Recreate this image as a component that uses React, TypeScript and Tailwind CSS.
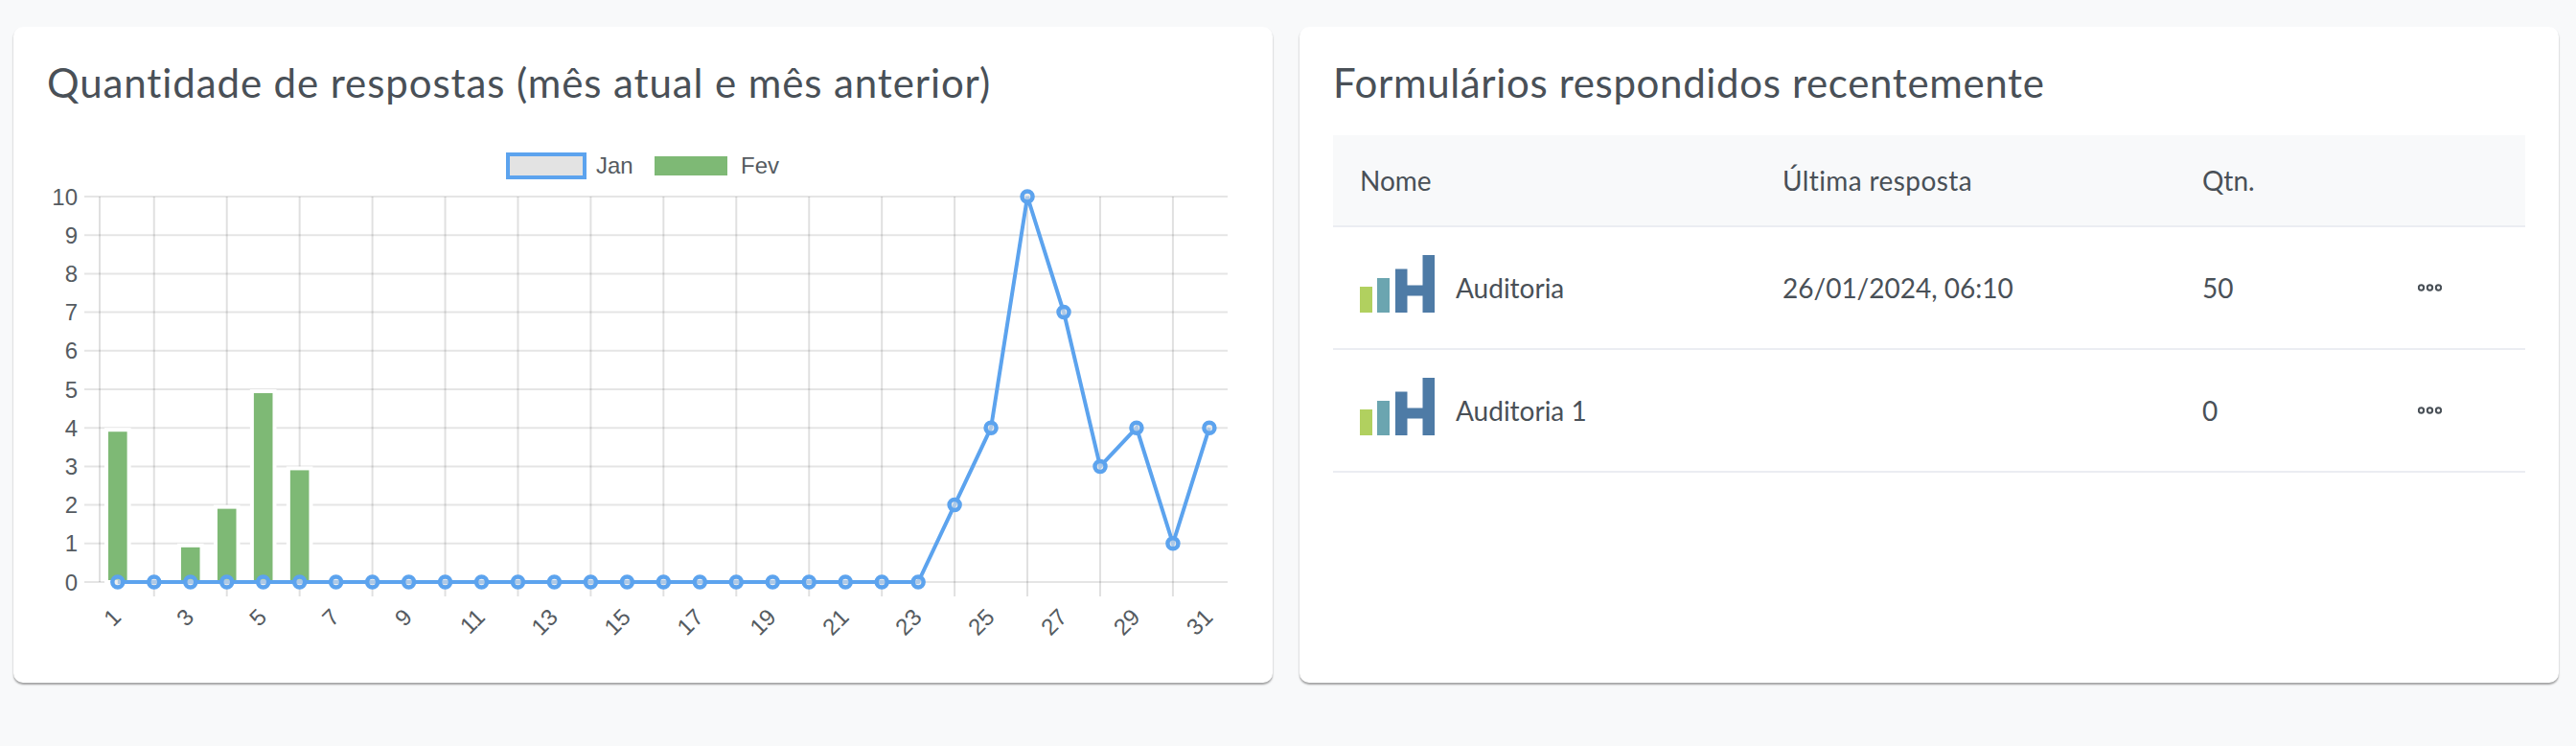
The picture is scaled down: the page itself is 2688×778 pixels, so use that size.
import React from 'react';

const janData = [0, 0, 0, 0, 0, 0, 0, 0, 0, 0, 0, 0, 0, 0, 0, 0, 0, 0, 0, 0, 0, 0, 0, 2, 4, 10, 7, 3, 4, 1, 4];
const fevData = [3.9, 0, 0.9, 1.9, 4.9, 2.9];

const Y_ZERO = 607;
const Y_UNIT = 40.2;
const X_FIRST = 122.8;
const X_STEP = 37.97;

const px = (i: number) => X_FIRST + i * X_STEP;
const py = (v: number) => Y_ZERO - v * Y_UNIT;

const SalesChart = () => {
  const yTicks = [0, 1, 2, 3, 4, 5, 6, 7, 8, 9, 10];
  const vLines = [104];
  for (let i = 1; i < 31; i += 2) vLines.push(px(i));
  const linePoints = janData.map((v, i) => `${px(i)},${py(v)}`).join(' ');

  return (
    <svg viewBox="49 141 1244 536" className="block w-[1244px] h-[536px] font-['Liberation_Sans',sans-serif] text-[24px]">
      {/* grid */}
      {yTicks.map((t) => (
        <line key={t} x1="88" x2="1281" y1={py(t)} y2={py(t)} stroke="#000" strokeOpacity="0.1" strokeWidth="2" />
      ))}
      {vLines.map((x, i) => (
        <line key={i} x1={x} x2={x} y1="205" y2={i === 0 ? 607 : 622} stroke="#000" strokeOpacity="0.12" strokeWidth="2" />
      ))}

      {/* legend */}
      <rect x="530" y="161" width="80" height="24" fill="#e3e3e3" stroke="#5ca3ee" strokeWidth="4" />
      <text x="622" y="181" fill="#555b61">Jan</text>
      <rect x="683" y="163" width="76" height="20" fill="#7eb975" />
      <text x="773" y="181" fill="#555b61">Fev</text>

      {/* y axis */}
      {yTicks.map((t) => (
        <text key={t} x="81" y={py(t) + 8.5} textAnchor="end" fill="#555b61">{t}</text>
      ))}

      {/* x axis */}
      {janData.map((_, i) =>
        i % 2 === 0 ? (
          <text
            key={i}
            transform={`translate(${px(i) + 5} 645) rotate(-45)`}
            textAnchor="end"
            fill="#555b61"
          >
            {i + 1}
          </text>
        ) : null
      )}

      {/* bars */}
      {fevData.map((v, i) =>
        v > 0 ? (
          <rect
            key={i}
            x={px(i) - 11.8}
            y={py(v) - 2}
            width="23.6"
            height={v * Y_UNIT + 2}
            fill="#7eb975"
            stroke="#fff"
            strokeWidth="4"
          />
        ) : null
      )}

      {/* line */}
      <polyline points={linePoints} fill="none" stroke="#5ca3ee" strokeWidth="4" />
      {janData.map((v, i) => (
        <circle key={i} cx={px(i)} cy={py(v)} r="5.5" fill="#e3e3e3" fillOpacity="0.6" stroke="#5ca3ee" strokeWidth="4.5" />
      ))}
    </svg>
  );
};

const FormLogo = () => (
  <svg viewBox="0 0 78 60" className="w-[78px] h-[60px] shrink-0 -mt-2">
    <rect x="0" y="33" width="13" height="27" fill="#b1d05f" />
    <rect x="18" y="24" width="13" height="36" fill="#6ba5b0" />
    <path d="M37 14.500h12.500v17h16V0H78v60H65.500V42.500h-16V60H37z" fill="#4e7ba6" />
  </svg>
);

const DotsIcon = () => (
  <svg viewBox="0 0 25 8" className="w-[25px] h-[8px]" fill="none" stroke="#495057" strokeWidth="2">
    <circle cx="3.500" cy="4" r="2.700" />
    <circle cx="12.500" cy="4" r="2.700" />
    <circle cx="21.500" cy="4" r="2.700" />
  </svg>
);

const rows = [
  { name: 'Auditoria', last: '26/01/2024, 06:10', qtn: '50' },
  { name: 'Auditoria 1', last: '', qtn: '0' },
];

const App = () => {
  return (
    <div className="min-h-[778px] w-[2688px] bg-[#f8f9fa] pt-[28px] pl-[14px] font-['Lato',sans-serif] text-[#495057]">
      <div className="grid grid-cols-[1314px_1314px] gap-[28px]">
        <div className="h-[684px] rounded-[10px] bg-white px-[35px] pt-[35px] shadow-[0_2px_2px_rgba(0,0,0,0.35)]">
          <h2 className="mb-[30px] h-[48px] text-[42px] leading-[46px] tracking-[0.9px] font-normal whitespace-nowrap">
            Quantidade de respostas (mês atual e mês anterior)
          </h2>
          <SalesChart />
        </div>

        <div className="h-[684px] rounded-[10px] bg-white px-[35px] pt-[35px] shadow-[0_2px_2px_rgba(0,0,0,0.35)]">
          <h2 className="mb-[30px] h-[48px] text-[42px] leading-[46px] tracking-[0.65px] font-normal whitespace-nowrap">
            Formulários respondidos recentemente
          </h2>
          <table className="w-[1244px] table-fixed border-collapse text-[28px]">
            <colgroup>
              <col className="w-[441px]" />
              <col className="w-[438px]" />
              <col className="w-[225px]" />
              <col />
            </colgroup>
            <thead>
              <tr className="h-[95px] border-b-2 border-[#ebedf2] bg-[#f8f9fa]">
                <th className="pl-[28px] text-left font-normal">Nome</th>
                <th className="pl-[28px] text-left font-normal tracking-[0.4px]">Última resposta</th>
                <th className="pl-[28px] text-left font-normal">Qtn.</th>
                <th />
              </tr>
            </thead>
            <tbody>
              {rows.map((row) => (
                <tr key={row.name} className="h-[128px] border-b-2 border-[#ebedf2]">
                  <td className="pl-[28px]">
                    <div className="flex items-center gap-[22px]">
                      <FormLogo />
                      <span>{row.name}</span>
                    </div>
                  </td>
                  <td className="pl-[28px]">{row.last}</td>
                  <td className="pl-[28px]">{row.qtn}</td>
                  <td className="pl-[28px]">
                    <DotsIcon />
                  </td>
                </tr>
              ))}
            </tbody>
          </table>
        </div>
      </div>
    </div>
  );
};

export default App;
